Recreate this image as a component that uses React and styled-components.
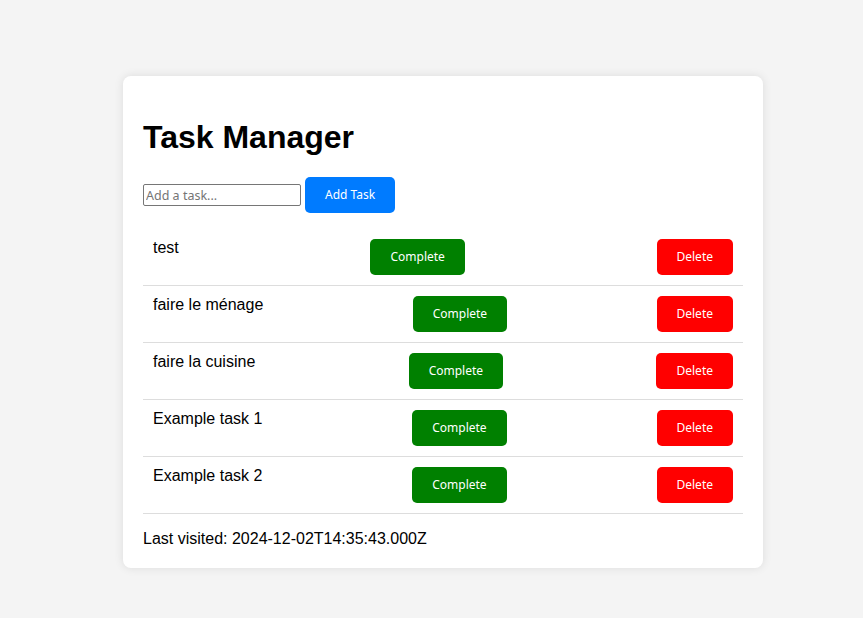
import React, { useState } from "react";
import styled, { createGlobalStyle } from "styled-components";

const GlobalStyle = createGlobalStyle`
  html, body {
    margin: 0;
    padding: 0;
    background: #f4f4f4;
    font-family: "Liberation Sans", Arial, sans-serif;
  }
`;

const Page = styled.div`
  padding: 76px 0 0 123px;
  min-height: 618px;
  box-sizing: border-box;
`;

const Card = styled.div`
  width: 640px;
  box-sizing: border-box;
  padding: 20px;
  background: #fff;
  border-radius: 8px;
  box-shadow: 0 0 10px rgba(0, 0, 0, 0.1);
`;

const Title = styled.h1`
  font-size: 32px;
  font-weight: bold;
  margin: 23px 0 21px;
  color: #000;
`;

const Form = styled.div`
  display: flex;
  align-items: center;
  gap: 4px;
`;

const TaskInput = styled.input`
  width: 158px;
  height: 22px;
  box-sizing: border-box;
  border: 1px solid #767676;
  border-radius: 2px;
  padding: 1px 2px;
  font-family: "Noto Sans", "Open Sans", sans-serif;
  font-size: 12.5px;
  color: #000;
  &::placeholder {
    color: #757575;
  }
`;

const Button = styled.button`
  border: none;
  border-radius: 5px;
  padding: 10px 20px;
  height: 36px;
  font-family: "Noto Sans", "Open Sans", sans-serif;
  font-size: 12px;
  color: #fff;
  background: ${(p) => p.$bg};
  cursor: pointer;
  line-height: 16px;
`;

const List = styled.ul`
  list-style: none;
  padding: 0;
  margin: 16px 0;
`;

const Row = styled.li`
  display: flex;
  justify-content: space-between;
  padding: 10px;
  border-bottom: 1px solid #ddd;
  font-size: 16px;
  color: #000;
`;

const TaskText = styled.span`
  line-height: 18px;
`;

const Footer = styled.div`
  font-size: 16px;
  color: #000;
  line-height: 18px;
`;

export default function App() {
  const [tasks] = useState([
    "test",
    "faire le ménage",
    "faire la cuisine",
    "Example task 1",
    "Example task 2",
  ]);
  return (
    <>
      <GlobalStyle />
      <Page>
        <Card>
          <Title>Task Manager</Title>
          <Form>
            <TaskInput placeholder="Add a task..." />
            <Button $bg="#007bff">Add Task</Button>
          </Form>
          <List>
            {tasks.map((t) => (
              <Row key={t}>
                <TaskText>{t}</TaskText>
                <Button $bg="#008000">Complete</Button>
                <Button $bg="#ff0000">Delete</Button>
              </Row>
            ))}
          </List>
          <Footer>Last visited: 2024-12-02T14:35:43.000Z</Footer>
        </Card>
      </Page>
    </>
  );
}
